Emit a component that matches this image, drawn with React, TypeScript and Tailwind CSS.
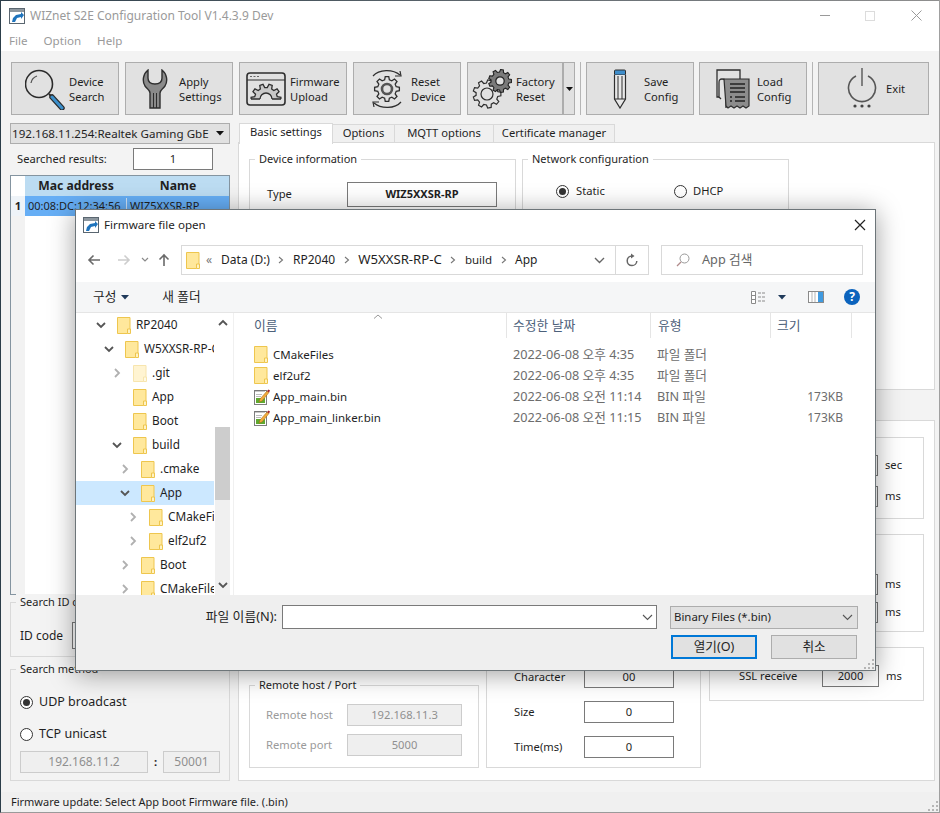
import type { ReactNode } from "react";

const FONT = "font-['Noto_Sans','Noto_Sans_CJK_KR',sans-serif]";

// gear outline with trapezoid teeth
function gearPath(cx: number, cy: number, ro: number, ri: number, n: number) {
  const step = (Math.PI * 2) / n;
  const pts: string[] = [];
  for (let i = 0; i < n; i++) {
    const a = i * step;
    const list: [number, number][] = [
      [ri, a - step * 0.32],
      [ro, a - step * 0.18],
      [ro, a + step * 0.18],
      [ri, a + step * 0.32],
    ];
    list.forEach(([r, t]) => {
      pts.push(`${(cx + r * Math.cos(t)).toFixed(2)} ${(cy + r * Math.sin(t)).toFixed(2)}`);
    });
  }
  return "M" + pts.join("L") + "Z";
}

function AppIcon({ className }: { className?: string }) {
  return (
    <svg width="16" height="16" viewBox="0 0 16 16" className={className}>
      <rect x="0.5" y="0.5" width="15" height="15" fill="#fff" stroke="#5a6670" />
      <rect x="1" y="1" width="14" height="3" fill="#8d979f" />
      <path d="M3 14 L6 14 L8 10 L12 9 L12 11 L15 7 L12 4 L12 6 L7 7 L4 10 Z" fill="#1f74bd" />
    </svg>
  );
}

function SearchIcon() {
  return (
    <svg width="40" height="42" viewBox="0 0 40 42" className="ml-[13px] shrink-0">
      <circle cx="14" cy="16" r="13.5" fill="none" stroke="#2b2b2b" strokeWidth="1.6" />
      <path d="M6 15 A9 9 0 0 1 12 8" fill="none" stroke="#555" strokeWidth="1.3" />
      <path d="M24 26 L27 29" stroke="#2b2b2b" strokeWidth="2" />
      <path d="M27 29 L37 40" stroke="#2b2b2b" strokeWidth="5.5" strokeLinecap="round" />
      <path d="M27 29 L37 40" stroke="#3b8fcb" strokeWidth="3" strokeLinecap="round" />
    </svg>
  );
}

function WrenchIcon() {
  return (
    <svg width="26" height="40" viewBox="0 0 26 40" className="ml-[16px] shrink-0">
      <path
        d="M6 1 C1 5 0 12 3 17 C5 20 8 21 8 24 L8 39 L18 39 L18 24 C18 21 21 20 23 17 C26 12 25 5 20 1 L20 9 C20 13 17 15 13 15 C9 15 6 13 6 9 Z"
        fill="#8a8a8a"
        stroke="#2e2e2e"
        strokeWidth="1.4"
      />
      <path d="M11.5 24 L11.5 39 M14.5 24 L14.5 39" stroke="#2e2e2e" strokeWidth="1" />
    </svg>
  );
}

function FirmwareIcon() {
  return (
    <svg width="40" height="34" viewBox="0 0 40 34" className="ml-[6px] shrink-0">
      <defs>
        <clipPath id="fw-clip">
          <rect x="0" y="0" width="40" height="27" />
        </clipPath>
      </defs>
      <rect x="1" y="1" width="38" height="32" rx="3" fill="#e1e1e1" stroke="#2e2e2e" strokeWidth="1.6" />
      <path d="M1 8 L39 8" stroke="#2e2e2e" strokeWidth="1.2" />
      <path d="M4 4.5 L6 4.5 M7.5 4.5 L9.5 4.5 M11 4.5 L13 4.5" stroke="#666" strokeWidth="1.2" />
      <g clipPath="url(#fw-clip)">
        <path d={gearPath(20, 27, 15, 11.5, 10)} fill="#c9c9c9" stroke="#2e2e2e" strokeWidth="1.3" />
        <circle cx="20" cy="27" r="6" fill="#e1e1e1" stroke="#2e2e2e" strokeWidth="1.3" />
      </g>
      <path d="M5 27 L14 27 M26 27 L35 27" stroke="#2e2e2e" strokeWidth="1.3" />
    </svg>
  );
}

function ResetIcon() {
  return (
    <svg width="32" height="40" viewBox="0 0 32 40" className="ml-[17px] shrink-0">
      <path d={gearPath(16, 20, 12.5, 9.5, 8)} fill="#e1e1e1" stroke="#2e2e2e" strokeWidth="1.3" />
      <circle cx="16" cy="20" r="5" fill="none" stroke="#555" strokeWidth="2.6" />
      <path d="M2 7 C8 0 22 0 29 6" fill="none" stroke="#2e2e2e" strokeWidth="1.2" />
      <path d="M24 7 L30 7 L29 2" fill="none" stroke="#2e2e2e" strokeWidth="1.2" />
      <path d="M30 33 C24 40 10 40 3 34" fill="none" stroke="#2e2e2e" strokeWidth="1.2" />
      <path d="M8 33 L2 33 L3 38" fill="none" stroke="#2e2e2e" strokeWidth="1.2" />
    </svg>
  );
}

function FactoryIcon() {
  return (
    <svg width="40" height="40" viewBox="0 0 40 40" className="ml-[4px] shrink-0">
      <path d={gearPath(15, 25, 14, 11, 9)} fill="#e1e1e1" stroke="#2e2e2e" strokeWidth="1.2" />
      <circle cx="15" cy="25" r="6" fill="none" stroke="#2e2e2e" strokeWidth="1.2" />
      <path d={gearPath(28, 12, 11.5, 9, 9)} fill="#7a7a7a" stroke="#222" strokeWidth="1.1" />
      <circle cx="28" cy="12" r="4.2" fill="#e1e1e1" stroke="#222" strokeWidth="1.2" />
    </svg>
  );
}

function PencilIcon() {
  return (
    <svg width="14" height="40" viewBox="0 0 14 40" className="ml-[26px] shrink-0">
      <rect x="1.5" y="1" width="11" height="5" rx="1" fill="#3f8ecb" stroke="#2e2e2e" />
      <path d="M1.5 6 L1.5 30 L7 39 L12.5 30 L12.5 6" fill="#e8e8e8" stroke="#2e2e2e" strokeWidth="1.2" />
      <path d="M5 7 L5 30 M9 7 L9 30 M1.5 30 L12.5 30" stroke="#2e2e2e" strokeWidth="1" />
    </svg>
  );
}

function LoadIcon() {
  return (
    <svg width="34" height="40" viewBox="0 0 34 40" className="ml-[16px] shrink-0">
      <path d="M3 28 L1 28 L1 1 L24 1 L24 10" fill="none" stroke="#2e2e2e" strokeWidth="1.3" />
      <path d="M10 39 L10 13 C10 11 8 10 6 10 C3 10 3 12 3 14 L3 28 L5 30" fill="none" stroke="#2e2e2e" strokeWidth="1.3" />
      <path
        d="M8 10 L33 10 L33 37 L30 39 L27 37 L24 39 L21 37 L18 39 L15 37 L12 39 L10 37 Z"
        fill="#8c8c8c"
        stroke="#2e2e2e"
        strokeWidth="1.2"
      />
      <path d="M14 15 L29 15 M14 19 L29 19 M14 23 L29 23 M14 28 L16 28 M19 28 L29 28 M14 32 L16 32 M19 32 L29 32" stroke="#222" strokeWidth="1.3" />
    </svg>
  );
}

function PowerIcon() {
  return (
    <svg width="30" height="42" viewBox="0 0 30 42" className="ml-[28px] shrink-0">
      <path d="M9 8 A13.5 13.5 0 1 0 21 8" fill="none" stroke="#565656" strokeWidth="1.6" />
      <path d="M15 0 L15 18" stroke="#565656" strokeWidth="1.4" />
      <circle cx="8" cy="38" r="1.6" fill="#444" />
      <circle cx="15" cy="38" r="1.6" fill="#444" />
      <circle cx="22" cy="38" r="1.6" fill="#444" />
    </svg>
  );
}

function ToolButton({ icon, lines, textClass, className }: { icon: ReactNode; lines: string[]; textClass: string; className: string }) {
  return (
    <button className={`flex h-[53px] w-[108px] shrink-0 items-center border border-[#adadad] bg-[#e1e1e1] text-left text-[11.2px] leading-[15px] text-[#1f1f1f] ${className}`}>
      {icon}
      <span className={textClass}>
        {lines.map((l) => (
          <span key={l} className="block">
            {l}
          </span>
        ))}
      </span>
    </button>
  );
}

function Group({ title, className, bg, children }: { title?: string; className: string; bg: string; children?: ReactNode }) {
  return (
    <div className={`border border-[#d9d9d9] ${className}`}>
      {title && <div className={`-mt-[9px] ml-[5px] h-4 w-fit px-[4px] text-[11px] leading-4 text-[#1f1f1f] ${bg}`}>{title}</div>}
      {children}
    </div>
  );
}

function Radio({ checked }: { checked?: boolean }) {
  return (
    <span className="flex h-[13px] w-[13px] shrink-0 items-center justify-center rounded-full border border-[#333] bg-white">
      {checked && <span className="h-[7px] w-[7px] rounded-full bg-[#333]" />}
    </span>
  );
}

function Field({ value, className }: { value: string; className: string }) {
  return <div className={`flex items-center justify-center border border-[#7a7a7a] bg-white text-[11.2px] text-[#1f1f1f] ${className}`}>{value}</div>;
}

function DisabledField({ value, className }: { value: string; className: string }) {
  return <div className={`flex items-center justify-center border border-[#cccccc] bg-[#efefef] text-[11.2px] text-[#8f8f8f] ${className}`}>{value}</div>;
}

function Folder({ faded }: { faded?: boolean }) {
  return (
    <svg width="14" height="17" viewBox="0 0 14 17" className={`shrink-0 ${faded ? "opacity-45" : ""}`}>
      <path d="M0.5 0.5 L13 0.5 L13 12 L10.5 16.5 L0.5 16.5 Z" fill="#ffe89c" stroke="#eec64e" />
      <path d="M10.5 12 L13.5 12 L13.5 16.5 L10.5 16.5 Z" fill="#fff2c4" stroke="#eec64e" />
    </svg>
  );
}

function BinFileIcon() {
  return (
    <svg width="16" height="16" viewBox="0 0 16 16" className="shrink-0">
      <rect x="0.5" y="1.5" width="12" height="14" fill="#fff" stroke="#7d7d7d" />
      <path d="M1 1.5 L12 1.5 M2 1 L2 3 M4 1 L4 3 M6 1 L6 3 M8 1 L8 3 M10 1 L10 3" stroke="#777" strokeWidth="0.8" />
      <path d="M2 9 L11 9 L11 14 L2 14 Z" fill="#5fa82e" />
      <path d="M2 5.5 L8 5.5 M2 7.5 L7 7.5" stroke="#bbb" />
      <path d="M5 13 L6 10 L13 2 L15 3.5 L8 12 Z" fill="#f2a93b" stroke="#9b6a17" strokeWidth="0.5" />
      <path d="M13 2 L15 3.5 L16 1.5 L14.5 0.5 Z" fill="#a3232a" />
    </svg>
  );
}

function Crumb() {
  return (
    <svg width="6" height="8" viewBox="0 0 6 8" className="shrink-0">
      <path d="M1 1 L4.5 4 L1 7" fill="none" stroke="#777" strokeWidth="1.1" />
    </svg>
  );
}

function Chevron({ open, light }: { open?: boolean; light?: boolean }) {
  const color = open ? "#555" : "#b0b0b0";
  return (
    <svg width="10" height="10" viewBox="0 0 10 10" className={`shrink-0 ${light ? "opacity-70" : ""}`}>
      {open ? (
        <path d="M1 3 L5 7 L9 3" fill="none" stroke={color} strokeWidth="1.8" />
      ) : (
        <path d="M3 1 L7 5 L3 9" fill="none" stroke={color} strokeWidth="1.8" />
      )}
    </svg>
  );
}

function Grip({ className }: { className: string }) {
  return (
    <svg width="11" height="11" viewBox="0 0 11 11" className={className}>
      <path d="M8 0h2v2H8zM4 4h2v2H4zM8 4h2v2H8zM0 8h2v2H0zM4 8h2v2H4zM8 8h2v2H8z" fill="#b5b5b5" />
    </svg>
  );
}

const treeRows = [
  { name: "RP2040", level: "pl-[20px]", open: true },
  { name: "W5XXSR-RP-C", level: "pl-[28px]", open: true },
  { name: ".git", level: "pl-[36px]", faded: true },
  { name: "App", level: "pl-[36px]", none: true },
  { name: "Boot", level: "pl-[36px]", none: true },
  { name: "build", level: "pl-[36px]", open: true },
  { name: ".cmake", level: "pl-[44px]" },
  { name: "App", level: "pl-[44px]", open: true, selected: true },
  { name: "CMakeFiles", level: "pl-[52px]" },
  { name: "elf2uf2", level: "pl-[52px]" },
  { name: "Boot", level: "pl-[44px]" },
  { name: "CMakeFiles", level: "pl-[44px]" },
];

const fileRows = [
  { name: "CMakeFiles", date: "2022-06-08 오후 4:35", type: "파일 폴더", size: "", folder: true },
  { name: "elf2uf2", date: "2022-06-08 오후 4:35", type: "파일 폴더", size: "", folder: true },
  { name: "App_main.bin", date: "2022-06-08 오전 11:14", type: "BIN 파일", size: "173KB" },
  { name: "App_main_linker.bin", date: "2022-06-08 오전 11:15", type: "BIN 파일", size: "173KB" },
];

const fileGrid = "grid grid-cols-[273px_144px_120px_81px]";

function FileDialog() {
  return (
    <div className="absolute left-[74px] top-[209px] flex h-[462px] w-[801px] flex-col border border-[#6d7579] bg-white text-[12px] text-[#1f1f1f] shadow-[0_3px_24px_rgba(0,0,0,0.38)]">
      {/* title */}
      <div className="flex h-[30px] shrink-0 items-center pl-[7px] pr-[9px]">
        <AppIcon />
        <span className="ml-[5px] text-[11.6px]">Firmware file open</span>
        <svg width="12" height="12" viewBox="0 0 12 12" className="ml-auto">
          <path d="M1 1 L11 11 M11 1 L1 11" stroke="#222" strokeWidth="1.2" />
        </svg>
      </div>
      {/* address */}
      <div className="mt-[5px] flex h-[30px] shrink-0 items-center">
        <div className="flex w-[105px] shrink-0 items-center">
          <svg width="14" height="12" viewBox="0 0 14 12" className="ml-[11px]">
            <path d="M13 6 L2 6 M6.5 1.5 L2 6 L6.5 10.5" fill="none" stroke="#6a6a6a" strokeWidth="1.6" />
          </svg>
          <svg width="14" height="12" viewBox="0 0 14 12" className="ml-[16px]">
            <path d="M1 6 L12 6 M7.5 1.5 L12 6 L7.5 10.5" fill="none" stroke="#cdcdcd" strokeWidth="1.6" />
          </svg>
          <svg width="8" height="6" viewBox="0 0 8 6" className="ml-[10px]">
            <path d="M1 1 L4 4 L7 1" fill="none" stroke="#8a8a8a" strokeWidth="1.2" />
          </svg>
          <svg width="12" height="14" viewBox="0 0 12 14" className="ml-[9px]">
            <path d="M6 13 L6 2 M1.5 6.5 L6 2 L10.5 6.5" fill="none" stroke="#6a6a6a" strokeWidth="1.6" />
          </svg>
        </div>
        <div className="flex h-[30px] w-[468px] shrink-0 items-center border border-[#d9d9d9] pl-[4px]">
          <Folder />
          <span className="ml-[6px] text-[#777]">«</span>
          <span className="ml-[9px]">Data (D:)</span>
          <span className="mx-[8.5px]"><Crumb /></span>
          <span>RP2040</span>
          <span className="mx-[8.5px]"><Crumb /></span>
          <span className="text-[13.2px]">W5XXSR-RP-C</span>
          <span className="mx-[8.5px]"><Crumb /></span>
          <span className="text-[11.5px]">build</span>
          <span className="mx-[8.5px]"><Crumb /></span>
          <span>App</span>
          <svg width="11" height="7" viewBox="0 0 11 7" className="ml-auto mr-[10px]">
            <path d="M1 1 L5.5 5.5 L10 1" fill="none" stroke="#666" strokeWidth="1.4" />
          </svg>
          <div className="flex h-full w-[33px] items-center justify-center border-l border-[#d9d9d9]">
            <svg width="12" height="14" viewBox="0 0 12 14">
              <path d="M6 3 A4.8 4.8 0 1 0 10.8 8" fill="none" stroke="#666" strokeWidth="1.5" />
              <path d="M5 0.5 L8.5 3 L5 5.5 Z" fill="#666" />
            </svg>
          </div>
        </div>
        <div className="ml-[12px] flex h-[30px] w-[202px] shrink-0 items-center border border-[#d9d9d9] pl-[14px] text-[12.7px] text-[#666]">
          <svg width="14" height="14" viewBox="0 0 14 14">
            <circle cx="8.5" cy="5.5" r="4.5" fill="none" stroke="#999" />
            <path d="M5 9 L1 13" stroke="#b08a8a" strokeWidth="1.2" />
          </svg>
          <span className="ml-[12px]">App 검색</span>
        </div>
      </div>
      {/* commands */}
      <div className="mt-[7px] flex h-[31px] shrink-0 items-center border-b border-[#e5e5e5] bg-[#f5f6f7] pl-[17px] pr-[15px] text-[12.7px]">
        <span>구성</span>
        <svg width="8" height="5" viewBox="0 0 8 5" className="ml-[5px]">
          <path d="M0 0 L8 0 L4 4.5 Z" fill="#1f3a5a" />
        </svg>
        <span className="ml-[33px]">새 폴더</span>
        <svg width="17" height="13" viewBox="0 0 17 13" className="ml-auto">
          <path d="M.5 .5h4v12h-4z M.5 4.5h4 M.5 8.5h4" fill="#fff" stroke="#8a8a8a" />
          <path d="M7 2h3M11 2h3M7 6h3M11 6h3M7 10h3M11 10h3" stroke="#8a8a8a" />
        </svg>
        <svg width="8" height="5" viewBox="0 0 8 5" className="ml-[10px]">
          <path d="M0 0 L8 0 L4 4.5 Z" fill="#1f3a5a" />
        </svg>
        <svg width="16" height="12" viewBox="0 0 16 12" className="ml-[22px]">
          <rect x="0.5" y="0.5" width="15" height="11" fill="#fff" stroke="#8a8a8a" />
          <rect x="10" y="1" width="5" height="10" fill="#3f9ae0" />
          <path d="M4 1 L4 11 M7 1 L7 11" stroke="#b5b5b5" />
        </svg>
        <span className="ml-[20px] flex h-[16px] w-[16px] items-center justify-center rounded-full bg-[#0b63bd] text-[12px] font-bold leading-none text-white">?</span>
      </div>
      {/* body */}
      <div className="flex h-[282px] shrink-0">
        <div className="w-[138px] shrink-0 overflow-hidden text-[11.8px]">
          {treeRows.map((r, i) => (
            <div key={i} className={`flex h-[24px] items-center ${r.level} ${r.selected ? "bg-[#cce8ff]" : ""}`}>
              <span className="flex w-[10px] shrink-0">{!r.none && <Chevron open={r.open} />}</span>
              <span className="ml-[11px] flex shrink-0">
                <Folder faded={r.faded} />
              </span>
              <span className="ml-[5px] whitespace-nowrap">{r.name}</span>
            </div>
          ))}
        </div>
        <div className="ml-[1px] flex w-[15px] shrink-0 flex-col">
          <div className="flex h-[114px] justify-center pt-[6px]">
            <svg width="10" height="7" viewBox="0 0 10 7">
              <path d="M1 6 L5 2 L9 6" fill="none" stroke="#555" strokeWidth="1.8" />
            </svg>
          </div>
          <div className="h-[73px] bg-[#cdcdcd]" />
          <div className="flex flex-1 items-end justify-center bg-[#f0f0f0] pb-[6px]">
            <svg width="10" height="7" viewBox="0 0 10 7">
              <path d="M1 1 L5 5 L9 1" fill="none" stroke="#555" strokeWidth="1.8" />
            </svg>
          </div>
        </div>
        <div className="ml-[3px] flex-1 border-l border-[#f0f0f0]">
          <div className={`${fileGrid} h-[25px] text-[12.8px] text-[#4c607a]`}>
            <div className="relative flex items-center border-r border-[#e5e5e5] pl-[20px]">
              이름
              <svg width="10" height="5" viewBox="0 0 10 5" className="absolute left-[139px] top-[1px]">
                <path d="M1 4.5 L5 1 L9 4.5" fill="none" stroke="#999" />
              </svg>
            </div>
            <div className="flex items-center border-r border-[#e5e5e5] pl-[6px]">수정한 날짜</div>
            <div className="flex items-center border-r border-[#e5e5e5] pl-[7px]">유형</div>
            <div className="flex items-center border-r border-[#e5e5e5] pl-[6px]">크기</div>
          </div>
          <div className="mt-[6px]">
            {fileRows.map((f) => (
              <div key={f.name} className={`${fileGrid} h-[21px] items-center`}>
                <div className="flex items-center pl-[20px] text-[11.5px]">
                  <span className="flex w-[19px] shrink-0">{f.folder ? <Folder /> : <BinFileIcon />}</span>
                  {f.name}
                </div>
                <div className="pl-[6px] text-[12.7px] text-[#6d6d6d]">{f.date}</div>
                <div className="pl-[6px] text-[12.7px] text-[#6d6d6d]">{f.type}</div>
                <div className="pr-[9px] text-right text-[#6d6d6d]">{f.size}</div>
              </div>
            ))}
          </div>
        </div>
      </div>
      {/* footer */}
      <div className="relative flex-1 bg-[#efefef]">
        <div className="mt-[10px] flex items-center">
          <span className="w-[201px] shrink-0 text-right text-[12.8px]">파일 이름(N):</span>
          <div className="ml-[5px] flex h-[24px] w-[375px] shrink-0 items-center justify-end border border-[#7a7a7a] bg-white pr-[3px]">
            <svg width="11" height="7" viewBox="0 0 11 7">
              <path d="M1 1 L5.5 5.5 L10 1" fill="none" stroke="#555" strokeWidth="1.1" />
            </svg>
          </div>
          <div className="ml-[13px] flex h-[23px] w-[188px] shrink-0 items-center justify-between border border-[#adadad] bg-[#e1e1e1] pl-[3px] pr-[4px] text-[11.4px]">
            Binary Files (*.bin)
            <svg width="11" height="7" viewBox="0 0 11 7">
              <path d="M1 1 L5.5 5.5 L10 1" fill="none" stroke="#555" strokeWidth="1.1" />
            </svg>
          </div>
        </div>
        <div className="mt-[6px] flex pl-[595px] text-[12.6px]">
          <button className="h-[24px] w-[86px] border-2 border-[#0078d7] bg-[#e1e1e1]">열기(O)</button>
          <button className="ml-[14px] h-[24px] w-[86px] border border-[#adadad] bg-[#e1e1e1]">취소</button>
        </div>
        <Grip className="absolute bottom-0 right-0" />
      </div>
    </div>
  );
}

export default function App() {
  return (
    <div className={`relative flex h-[813px] w-[940px] flex-col overflow-hidden border-b border-l border-r border-b-[#9a9a9a] border-l-[#2c3e4a] border-r-[#a0a0a0] bg-[#f3f3f3] ${FONT}`}>
      <div className="h-px shrink-0 bg-gradient-to-r from-[#2c3e4a] to-[#8f8f8f]" />
      {/* title bar */}
      <div className="flex h-[29px] shrink-0 items-center bg-white pl-[8px] text-[12px] text-[#9a9a9a]">
        <AppIcon />
        <span className="ml-[5px]">WIZnet S2E Configuration Tool V1.4.3.9 Dev</span>
        <div className="ml-auto flex items-center">
          <span className="h-px w-[10px] bg-[#9a9a9a]" />
          <span className="ml-[35px] h-[10px] w-[10px] border border-[#dcdcdc]" />
          <svg width="11" height="11" viewBox="0 0 11 11" className="ml-[36px] mr-[17px]">
            <path d="M0.5 0.5 L10.5 10.5 M10.5 0.5 L0.5 10.5" stroke="#9a9a9a" />
          </svg>
        </div>
      </div>
      {/* menu */}
      <div className="flex h-[21px] shrink-0 items-center gap-[16px] bg-white pl-[8px] text-[11.6px] text-[#9a9a9a]">
        <span>File</span>
        <span>Option</span>
        <span>Help</span>
      </div>
      {/* toolbar */}
      <div className="flex shrink-0 pl-[10px] pt-[11px]">
        <ToolButton icon={<SearchIcon />} lines={["Device", "Search"]} textClass="ml-[4px]" className="" />
        <ToolButton icon={<WrenchIcon />} lines={["Apply", "Settings"]} textClass="ml-[11px]" className="ml-[6px]" />
        <ToolButton icon={<FirmwareIcon />} lines={["Firmware", "Upload"]} textClass="ml-[4px]" className="ml-[6px]" />
        <ToolButton icon={<ResetIcon />} lines={["Reset", "Device"]} textClass="ml-[8px]" className="ml-[6px]" />
        <ToolButton
          icon={<FactoryIcon />}
          lines={["Factory", "Reset"]}
          textClass="ml-[4px]"
          className="relative ml-[6px]"
        />
        <div className="relative -ml-[13px] flex h-[53px] w-[13px] shrink-0 items-center justify-center border border-l-2 border-[#adadad] bg-[#e1e1e1]">
          <svg width="7" height="4" viewBox="0 0 7 4">
            <path d="M0 0 L7 0 L3.5 4 Z" fill="#111" />
          </svg>
        </div>
        <div className="ml-[5px] h-[53px] w-px shrink-0 bg-[#b5b5b5]" />
        <ToolButton icon={<PencilIcon />} lines={["Save", "Config"]} textClass="ml-[17px]" className="ml-[5px]" />
        <ToolButton icon={<LoadIcon />} lines={["Load", "Config"]} textClass="ml-[7px]" className="ml-[5px]" />
        <div className="ml-[5px] h-[53px] w-px shrink-0 bg-[#b5b5b5]" />
        <ToolButton icon={<PowerIcon />} lines={["Exit"]} textClass="ml-[9px]" className="ml-[5px] !w-[111px]" />
      </div>
      {/* main */}
      <div className="flex flex-1 pl-[9px] pt-[8px] text-[11.2px] text-[#1f1f1f]">
        {/* left column */}
        <div className="flex w-[220px] shrink-0 flex-col">
          <div className="flex h-[21px] items-center justify-between whitespace-nowrap border border-[#adadad] bg-[#e1e1e1] pl-[1px] pr-[5px] text-[11.6px]">
            192.168.11.254:Realtek Gaming GbE
            <svg width="8" height="5" viewBox="0 0 8 5">
              <path d="M0 0 L8 0 L4 4.5 Z" fill="#111" />
            </svg>
          </div>
          <div className="mt-[4px] flex h-[22px] items-center pl-[7px]">
            Searched results:
            <div className="ml-auto mr-[17px] flex h-[22px] w-[80px] items-center justify-center border border-[#7a7a7a] bg-white">1</div>
          </div>
          <div className="mt-[5px] flex h-[420px] flex-col border border-[#8494a0] bg-white">
            <div className="flex h-[20px] shrink-0">
              <div className="w-[14px] bg-white" />
              <div className="flex flex-1 items-center bg-[#bcdcf2] pt-px text-[12.2px] font-bold">
                <span className="w-[102px] text-center">Mac address</span>
                <span className="flex-1 text-center">Name</span>
              </div>
            </div>
            <div className="flex h-[20px] shrink-0">
              <div className="flex w-[14px] items-center justify-center bg-[#eef3f8] font-bold">1</div>
              <div className="flex flex-1 items-center bg-[#66aef5] pr-[2px] text-[11px]">
                <span className="w-[102px] border-r border-[#cfe3f7] pl-[3px]">00:08:DC:12:34:56</span>
                <span className="pl-[3px]">WIZ5XXSR-RP</span>
              </div>
            </div>
            <div className="flex flex-1">
              <div className="w-[14px] bg-[#f2f2f2]" />
            </div>
          </div>
          <Group title="Search ID code" bg="bg-[#f3f3f3]" className="mt-[7px] h-[55px]">
            <div className="mt-[12px] flex h-[27px] items-center pl-[9px] text-[12px]">
              ID code
              <div className="ml-[9px] h-[27px] w-[140px] border border-[#7a7a7a] bg-white" />
            </div>
          </Group>
          <Group title="Search method" bg="bg-[#f3f3f3]" className="mt-[12px] h-[112px]">
            <div className="mt-[17px] flex h-[16px] items-center pl-[9px] text-[12.5px]">
              <Radio checked />
              <span className="ml-[6px]">UDP broadcast</span>
            </div>
            <div className="mt-[16px] flex h-[16px] items-center pl-[9px] text-[12.5px]">
              <Radio />
              <span className="ml-[6px]">TCP unicast</span>
            </div>
            <div className="mt-[9px] flex items-center pl-[9px]">
              <DisabledField value="192.168.11.2" className="h-[22px] w-[128px] !text-[12px]" />
              <span className="w-[15px] text-center font-bold">:</span>
              <DisabledField value="50001" className="h-[22px] w-[57px] !text-[12px]" />
            </div>
          </Group>
        </div>
        {/* right column */}
        <div className="ml-[8px] flex w-[697px] shrink-0 flex-col">
          <div className="relative z-10 flex h-[20px] shrink-0">
            <div className="ml-px flex h-[21px] w-[94px] items-center justify-center border border-b-0 border-[#d9d9d9] bg-white pb-[3px]">Basic settings</div>
            <div className="flex h-[19px] w-[62px] items-center justify-center self-end border border-l-0 border-[#d9d9d9] bg-[#f0f0f0]">Options</div>
            <div className="flex h-[19px] w-[99px] items-center justify-center self-end border border-l-0 border-[#d9d9d9] bg-[#f0f0f0]">MQTT options</div>
            <div className="flex h-[19px] w-[121px] items-center justify-center self-end border border-l-0 border-[#d9d9d9] bg-[#f0f0f0]">Certificate manager</div>
          </div>
          <div className="-mt-px flex h-[248px] shrink-0 gap-[6px] border border-[#d9d9d9] bg-white pl-[10px] pt-[16px]">
            <Group title="Device information" bg="bg-white" className="h-[222px] w-[267px]">
              <div className="mt-[15px] flex items-center pl-[17px]">
                <span className="w-[80px]">Type</span>
                <Field value="WIZ5XXSR-RP" className="h-[25px] w-[150px] !text-[11px] font-bold" />
              </div>
            </Group>
            <Group title="Network configuration" bg="bg-white" className="h-[222px] w-[267px]">
              <div className="mt-[16px] flex items-center pl-[33px]">
                <Radio checked />
                <span className="ml-[7px] w-[98px]">Static</span>
                <Radio />
                <span className="ml-[6px]">DHCP</span>
              </div>
            </Group>
          </div>
          <div className="mt-[30px] flex h-[361px] shrink-0 border border-[#d9d9d9] bg-white pl-[10px]">
            <div className="flex w-[230px] shrink-0 flex-col justify-end pb-[12px]">
              <Group title="Remote host / Port" bg="bg-white" className="h-[83px]">
                <div className="mt-[11px] flex items-center pl-[16px] text-[#9a9a9a]">
                  <span className="w-[81px]">Remote host</span>
                  <DisabledField value="192.168.11.3" className="h-[22px] w-[115px]" />
                </div>
                <div className="mt-[8px] flex items-center pl-[16px] text-[#9a9a9a]">
                  <span className="w-[81px]">Remote port</span>
                  <DisabledField value="5000" className="h-[22px] w-[115px]" />
                </div>
              </Group>
            </div>
            <div className="ml-[7px] flex w-[215px] shrink-0 flex-col justify-end pb-[12px]">
              <Group className="flex h-[320px] flex-col justify-end gap-[13px] pb-[9px] pl-[27px]" bg="bg-white">
                <div className="flex items-center">
                  <span className="w-[70px]">Character</span>
                  <Field value="00" className="h-[22px] w-[90px]" />
                </div>
                <div className="flex items-center">
                  <span className="w-[70px]">Size</span>
                  <Field value="0" className="h-[22px] w-[90px]" />
                </div>
                <div className="flex items-center">
                  <span className="w-[70px]">Time(ms)</span>
                  <Field value="0" className="h-[22px] w-[90px]" />
                </div>
              </Group>
            </div>
            <div className="ml-[8px] flex w-[215px] shrink-0 flex-col gap-[15px] pt-[16px]">
              <Group bg="bg-white" className="h-[82px] pt-[17px]">
                <div className="flex items-center justify-end">
                  <Field value="" className="h-[21px] w-[56px]" />
                  <span className="ml-[7px] w-[38px]">sec</span>
                </div>
                <div className="mt-[10px] flex items-center justify-end">
                  <Field value="" className="h-[21px] w-[56px]" />
                  <span className="ml-[7px] w-[38px]">ms</span>
                </div>
              </Group>
              <Group bg="bg-white" className="h-[98px] pt-[39px]">
                <div className="flex items-center justify-end">
                  <Field value="" className="h-[21px] w-[56px]" />
                  <span className="ml-[7px] w-[38px]">ms</span>
                </div>
                <div className="mt-[7px] flex items-center justify-end">
                  <Field value="" className="h-[21px] w-[56px]" />
                  <span className="ml-[7px] w-[38px]">ms</span>
                </div>
              </Group>
              <Group bg="bg-white" className="h-[54px] pl-[29px] pt-[17px]">
                <div className="flex items-center">
                  <span className="w-[83px]">SSL receive</span>
                  <Field value="2000" className="h-[22px] w-[57px]" />
                  <span className="ml-[7px]">ms</span>
                </div>
              </Group>
            </div>
          </div>
        </div>
      </div>
      {/* status bar */}
      <div className="relative flex h-[20px] shrink-0 items-center bg-[#f0f0f0] pl-[10px] text-[11px] text-[#1f1f1f]">
        Firmware update: Select App boot Firmware file. (.bin)
        <Grip className="absolute bottom-0 right-0" />
      </div>
      <FileDialog />
    </div>
  );
}
